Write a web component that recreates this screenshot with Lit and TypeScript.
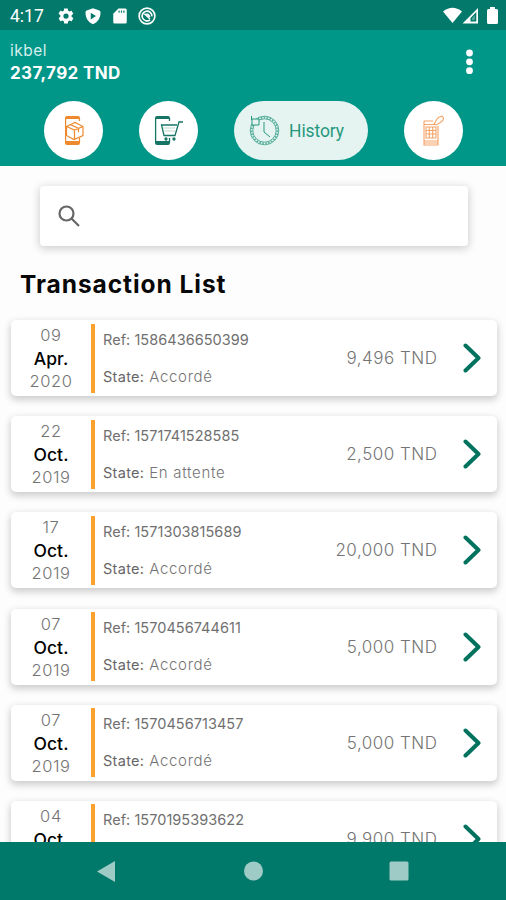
import { LitElement, html, css, svg } from "lit";
import { customElement, property } from "lit/decorators.js";

interface Transaction {
  day: string;
  month: string;
  year: string;
  ref: string;
  state: string;
  amount: string;
}

const TRANSACTIONS: Transaction[] = [
  { day: "09", month: "Apr.", year: "2020", ref: "1586436650399", state: "Accordé", amount: "9,496" },
  { day: "22", month: "Oct.", year: "2019", ref: "1571741528585", state: "En attente", amount: "2,500" },
  { day: "17", month: "Oct.", year: "2019", ref: "1571303815689", state: "Accordé", amount: "20,000" },
  { day: "07", month: "Oct.", year: "2019", ref: "1570456744611", state: "Accordé", amount: "5,000" },
  { day: "07", month: "Oct.", year: "2019", ref: "1570456713457", state: "Accordé", amount: "5,000" },
  { day: "04", month: "Oct.", year: "2019", ref: "1570195393622", state: "Accordé", amount: "9,900" },
];

@customElement("status-bar")
export class StatusBar extends LitElement {
  static styles = css`
    :host { display: flex; align-items: center; height: 30px; box-sizing: border-box; padding: 1px 8px 0 10px; background: #03796b; color: #fff; }
    .time { width: 47px; font: 400 17.500px/20px Roboto, sans-serif; letter-spacing: 0; }
    .left { display: flex; gap: 9px; flex: 1; }
    svg { display: block; fill: #fff; }
    .right { display: flex; align-items: center; }
    .battery { margin-left: 8px; }
  `;
  render() {
    return html`
      <span class="time">4:17</span>
      <div class="left">
        <svg width="18" height="18" viewBox="0 0 24 24"><path d="M19.4 13c.1-.6.1-1.3 0-2l2.1-1.600c.2-.2.2-.4.1-.6l-2-3.500c-.1-.2-.4-.3-.6-.2l-2.500 1c-.5-.4-1.100-.7-1.700-1L14.400 2.400c0-.2-.2-.4-.5-.4h-4c-.2 0-.4.2-.5.4L9 5.100c-.6.2-1.200.6-1.700 1l-2.500-1c-.2-.1-.5 0-.6.2l-2 3.500c-.1.2-.1.500.1.600L4.500 11c-.1.700-.1 1.300 0 2l-2.100 1.600c-.2.200-.2.400-.1.600l2 3.500c.1.200.4.300.6.200l2.500-1c.5.400 1.100.700 1.700 1l.4 2.700c0 .2.2.4.5.4h4c.2 0 .5-.2.5-.4l.4-2.700c.6-.2 1.200-.6 1.700-1l2.500 1c.2.1.5 0 .6-.2l2-3.500c.1-.2.1-.5-.1-.6zM12 15.500a3.500 3.500 0 1 1 0-7 3.500 3.500 0 0 1 0 7z"/></svg>
        <svg width="18" height="18" viewBox="0 0 24 24"><path fill-rule="evenodd" d="M12 1.500 20.500 4.500Q22 5 22 7C22 14 19 20 12 23 5 20 2 14 2 7Q2 5 3.500 4.500ZM9 7.500v9l7-4.500z"/></svg>
        <svg width="18" height="18" viewBox="0 0 24 24"><path fill-rule="evenodd" d="M10 2h9q2 0 2 2v16q0 2-2 2H5q-2 0-2-2V9zM10 4.500v3h1.500v-3zM13.200 4.500v3h1.500v-3zM16.400 4.500v3H18v-3z"/></svg>
        <svg width="18" height="18" viewBox="0 0 24 24"><g fill="none" stroke="#fff" stroke-width="2.200"><circle cx="12" cy="12" r="10.500"/><path d="M16 17.200A6.500 6.500 0 1 1 18.500 12.500M8.500 9l7.500 7M11 9.500q3.500 0 4.500 4"/></g></svg>
      </div>
      <div class="right">
        <svg width="19" height="17" viewBox="0 0 19 17"><path d="M0 4.500Q9.500-3 19 4.500L9.500 16z"/></svg>
        <svg width="17" height="17" viewBox="0 0 17 17"><path fill-rule="evenodd" d="M16 1v15.500H.5zM14.300 5 8.500 11v3.500h5.800z"/><path d="M10 11.500 12.800 8v5H10z" opacity=".35"/></svg>
        <svg class="battery" width="11" height="17" viewBox="0 0 11 17"><path d="M3 0h5v2h1.500Q11 2 11 3.500v12Q11 17 9.500 17h-8Q0 17 0 15.500v-12Q0 2 1.500 2H3z"/></svg>
      </div>`;
  }
}

const phone = svg`
  <path fill="currentColor" stroke="none" d="M1 4V3Q1 1 3 1h11q2 0 2 2v1zM1 26h15v2q0 2-2 2H3q-2 0-2-2z"/>
  <path d="M1.600 3v25M15.500 3v3M15.500 23v5"/>`;

@customElement("app-header")
export class AppHeader extends LitElement {
  static styles = css`
    :host { display: block; height: 136px; box-sizing: border-box; background: #009688; color: #fff; padding: 11px 0 0 10px; font-family: Inter, sans-serif; }
    .top { display: flex; justify-content: space-between; padding-right: 33px; height: 59px; }
    .name { font-size: 15.500px; line-height: 19px; letter-spacing: 0.5px; color: #d5f0ed; }
    .balance { font-size: 17px; line-height: 26px; font-weight: 750; letter-spacing: 0.35px; }
    .dots { margin-top: 8px; fill: #fff; }
    .tabs { display: flex; width: 419px; margin-left: 34px; padding-top: 0.500px; justify-content: space-between; }
    .tab { height: 59px; width: 59px; border-radius: 30px; background: #fff; display: flex; align-items: center; justify-content: center; }
    .active { width: 134px; box-sizing: border-box; justify-content: flex-start; padding-left: 14px; background: #e6f4f1; color: #26987f; gap: 9px; font: 400 17.500px/24px Roboto, sans-serif; letter-spacing: -0.1px; }
    .label { padding-top: 2px; }
    .tab svg { fill: none; stroke: currentColor; display: block; }
    .orange { color: #ee8a2d; }
    .peach { color: #f6a366; }
    .green { color: #167565; }
  `;
  render() {
    return html`
      <div class="top">
        <div><div class="name">ikbel</div><div class="balance">237,792 TND</div></div>
        <svg class="dots" width="7" height="26" viewBox="0 0 7 26"><circle cx="3.500" cy="4" r="3.400"/><circle cx="3.500" cy="12.800" r="3.400"/><circle cx="3.500" cy="21.700" r="3.400"/></svg>
      </div>
      <div class="tabs">
        <div class="tab orange">
          <svg width="20" height="31" viewBox="0 0 20 31" stroke-width="1.200">${phone}
            <path fill="#fff" d="M2.500 11.500 11 7.500l8 4v9l-9 4-7.500-4zM2.500 11.500l8 3.500 8.500-3.500M10.500 15v9M6.500 9.600l8 3.700v4"/></svg>
        </div>
        <div class="tab green">
          <svg width="30" height="31" viewBox="0 0 30 31" stroke-width="1.300">${phone}
            <path fill="#fff" stroke="none" d="M7.500 9.500h16L21 20.500H10z"/><path d="M23 10H7.500L10 20.500h11L25 7h4"/><path d="M9 13h12M10 16h11" stroke-width=".3"/><circle cx="12" cy="24" r="1" fill="currentColor"/><circle cx="20" cy="24" r="1" fill="currentColor"/></svg>
        </div>
        <div class="tab active">
          <svg width="32" height="32" viewBox="0 0 32 32"><g opacity=".75"><circle cx="16.500" cy="16.500" r="14.300"/><circle cx="16.500" cy="16.500" r="11.700"/><circle cx="16.500" cy="16.500" r="13" stroke-width="2" stroke-dasharray="1.500 1.500"/></g><path fill="#e6f4f1" d="M3.500 2v4M4 5h7v6H4z"/><path d="M16 8v10l6 5"/></svg>
          <span class="label">History</span>
        </div>
        <div class="tab peach">
          <svg width="21" height="31" viewBox="0 0 21 31" stroke-width="1.100"><path d="M1 6h9M1 6v24h14V11M1 9.500h11M3 12h10v11H3zM3 15.500h10M3 19h10M6.300 12v11M9.700 12v11M1 26h14M1 28h14M11 9l3-5q2-2.500 5-3l1.500 2q0 3-3 4.500L13 10z"/></svg>
        </div>
      </div>`;
  }
}

@customElement("transaction-card")
export class TransactionCard extends LitElement {
  @property({ attribute: false }) item!: Transaction;
  static styles = css`
    :host { display: flex; align-items: center; height: 76px; box-sizing: border-box; border-radius: 5px; background: #fff; box-shadow: 0 3px 7px 1px rgba(0,0,0,.19); font-family: Inter, sans-serif; color: #747474; }
    .date { width: 80px; padding-top: 1px; text-align: center; font-size: 16.500px; line-height: 23px; font-weight: 300; letter-spacing: 0.6px; }
    .month { color: #000; font-weight: 450; font-size: 17.500px; letter-spacing: 0.1px; }
    .bar { width: 4px; height: 69px; background: #fba12c; }
    .info { flex: 1; margin-left: 8px; font-size: 14.500px; line-height: 19px; display: flex; flex-direction: column; gap: 18px; white-space: nowrap; padding-bottom: 1px; }
    .ref { font-weight: 400; letter-spacing: 0.04px; color: #707070; }
    .state { font-size: 15px; font-weight: 300; letter-spacing: 0.7px; }
    .key { font-size: 14.500px; font-weight: 400; letter-spacing: 0.3px; color: #666; }
    .amount { font-size: 17px; font-weight: 300; letter-spacing: 0.5px; margin-right: 25.500px; }
    .chevron { display: block; margin-right: 16px; fill: none; stroke: #00725e; stroke-width: 4; stroke-linecap: round; stroke-linejoin: round; }
  `;
  render() {
    const t = this.item;
    return html`
      <div class="date"><div>${t.day}</div><div class="month">${t.month}</div><div>${t.year}</div></div>
      <div class="bar"></div>
      <div class="info">
        <div class="ref">Ref: ${t.ref}</div>
        <div class="state"><span class="key">State:</span> ${t.state}</div>
      </div>
      <div class="amount">${t.amount} TND</div>
      <svg class="chevron" width="18" height="30" viewBox="0 0 18 30"><path d="M2.500 2.500 15.500 15l-13 12.500"/></svg>`;
  }
}

@customElement("nav-bar")
export class NavBar extends LitElement {
  static styles = css`
    :host { display: flex; align-items: center; justify-content: space-between; height: 58px; box-sizing: border-box; padding: 0 97px 0 97px; background: #00796b; }
    svg { display: block; fill: #9fcbc6; }
  `;
  render() {
    return html`
      <svg width="20" height="21" viewBox="0 0 20 21"><path d="M0 10.500 18 0v21z"/></svg>
      <svg width="20" height="20" viewBox="0 0 20 20"><circle cx="10.500" cy="10" r="9.500"/></svg>
      <svg width="20" height="20" viewBox="0 0 20 20"><rect x=".5" y=".5" width="19" height="19" rx="1.500"/></svg>`;
  }
}

@customElement("app-root")
export class AppRoot extends LitElement {
  static styles = css`
    :host { display: flex; flex-direction: column; height: 900px; width: 506px; overflow: hidden; background: #fdfdfd; }
    status-bar, app-header, nav-bar { flex: none; }
    main { flex: 1; min-height: 0; overflow: hidden; padding-top: 20px; }
    .search { display: flex; align-items: center; height: 60px; margin: 0 38px 0 40px; padding-left: 17px; box-sizing: border-box; background: #fff; border-radius: 4px; box-shadow: 0 2px 8px 1px rgba(0,0,0,.18); }
    .search svg { fill: none; stroke: #666; stroke-width: 2.200; }
    h1 { margin: 22px 0 0 20px; font: 650 24.500px/32px Inter, sans-serif; letter-spacing: 0.95px; color: #080808; }
    .list { display: flex; flex-direction: column; gap: 20.200px; margin: 20px 9px 0 11px; }
  `;
  render() {
    return html`
      <status-bar></status-bar>
      <app-header></app-header>
      <main>
        <div class="search">
          <svg width="24" height="24" viewBox="0 0 24 24"><circle cx="9.500" cy="9.500" r="7"/><path d="M14.500 14.500 22 22"/></svg>
        </div>
        <h1>Transaction List</h1>
        <div class="list">${TRANSACTIONS.map((t) => html`<transaction-card .item=${t}></transaction-card>`)}</div>
      </main>
      <nav-bar></nav-bar>`;
  }
}
